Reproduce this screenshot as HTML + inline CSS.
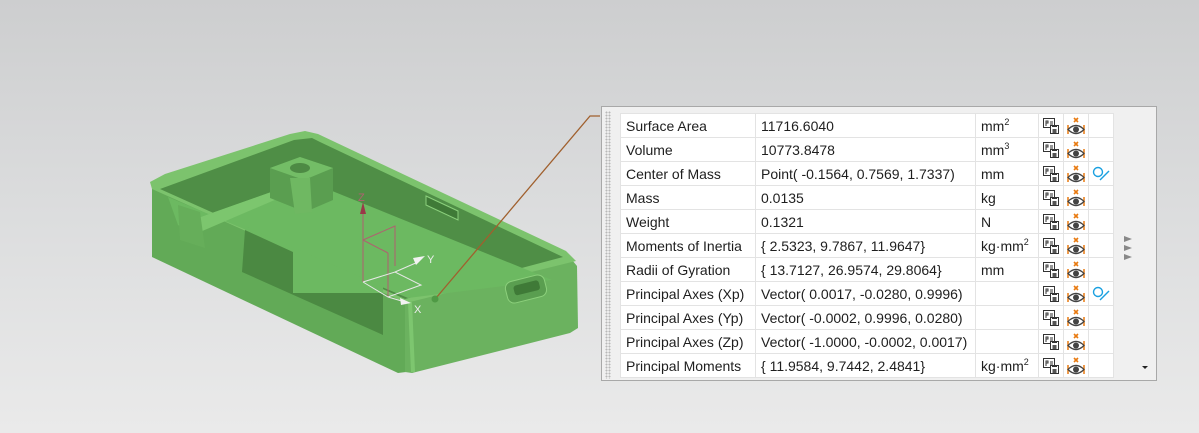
<!DOCTYPE html>
<html><head><meta charset="utf-8"><style>
html,body{margin:0;padding:0}
body{width:1199px;height:433px;overflow:hidden;position:relative;background:linear-gradient(#cdcecf 0%,#dcddde 50%,#eaeaea 100%);font-family:"Liberation Sans",sans-serif}
#panel{position:absolute;left:601px;top:106px;width:556px;height:275px;background:#f0f0f0;border:1px solid #a8a8a8;box-sizing:border-box}
#grip{position:absolute;left:3px;top:4px;width:6px;height:268px;background-image:radial-gradient(circle,#b8b8b8 0.9px,transparent 1.1px);background-size:3px 3px}
table{position:absolute;left:18px;top:6px;border-collapse:collapse;background:#fff;font-size:14px;color:#1e1e1e;table-layout:fixed}
tr{height:24px}
td{height:23px;max-height:23px;border:1px solid #e3e3e3;padding:0 0 0 5px;white-space:nowrap;line-height:22px;overflow:hidden}
td.i{padding:0;text-align:center;width:24px;line-height:0}
sup{font-size:9px;line-height:0;vertical-align:6px}
.arr{position:absolute;left:522px;width:0;height:0;border-top:3px solid transparent;border-bottom:3px solid transparent;border-left:8px solid #888}
</style></head><body>
<svg width="600" height="433" style="position:absolute;left:0;top:0">
<polygon points="152,186 405,300 406,372 398,373 152,257" fill="#62aa57"/>
<polygon points="405,300 572,260 577,266 578,328 570,333 412,373 405,372" fill="#6bb25f"/>
<line x1="410" y1="302" x2="413" y2="372" stroke="#7dc66f" stroke-width="4"/>
<polygon points="150,182 165,174 290,134 305,131 318,134 566,251 576,261 410,302 402,301 152,189" fill="#7cc36d"/>
<polygon points="160,189 294,140 312,138 320,142 563,257 405,299" fill="#4f8e46"/>
<polygon points="168,197 178,225 305,180 552,280 408,298" fill="#6cb961"/>
<polygon points="178,225 200,232 305,187 305,180" fill="#7cc66e"/>
<polygon points="270,168 300,157 333,168 333,200 305,212 270,198" fill="#5a9e50"/>
<polygon points="270,168 300,157 333,168 304,180" fill="#73bd66"/>
<ellipse cx="300" cy="168" rx="10" ry="5" fill="#4d8a44"/>
<polygon points="290,178 310,178 312,212 295,214" fill="#6fb862"/>
<polygon points="178,205 200,212 205,248 180,240" fill="#66ae5a"/>
<polygon points="426,196 458,211 458,220 426,205" fill="#3f7a37" stroke="#8bd07c" stroke-width="1"/>
<polygon points="245,226 383,287 383,293 293,293 293,252 245,230" fill="#6cb961"/>
<polygon points="245,230 293,252 293,293 383,293 383,335 242,272" fill="#4b8942"/>
<rect x="506" y="278" width="40" height="22" rx="7" fill="#5a9e50" stroke="#8cd07c" transform="rotate(-14 526 289)"/>
<rect x="514" y="283" width="26" height="10" rx="3" fill="#3f7a37" transform="rotate(-14 526 289)"/>
<g stroke-width="1" fill="none">
<polyline points="363,282 363,240 395,226 395,266" stroke="#b06070"/>
<line x1="363" y1="240" x2="388" y2="253" stroke="#b06070"/>
<line x1="388" y1="253" x2="388" y2="297" stroke="#b06070"/>
<line x1="363" y1="282" x2="363" y2="212" stroke="#b06070"/>
<polyline points="363,282 388,297 421,285 395,272 363,282" stroke="#e8e8e8"/>
<line x1="395" y1="272" x2="418" y2="262" stroke="#e8e8e8"/>
<line x1="388" y1="297" x2="405" y2="302" stroke="#e8e8e8"/>
</g>
<polygon points="360,214 366,214 363,202" fill="#9a3848"/>
<polygon points="413,258 425,256 416,265" fill="#f2f2f2"/>
<polygon points="400,298 411,303 401,305" fill="#f2f2f2"/>
<text x="358" y="201" font-size="11" fill="#b06070" font-family="Liberation Sans">Z</text>
<text x="427" y="263" font-size="11" fill="#eee" font-family="Liberation Sans">Y</text>
<text x="414" y="313" font-size="11" fill="#eee" font-family="Liberation Sans">X</text>
<polyline points="436,298 590,116 601,116" stroke="#a0602e" stroke-width="1.3" fill="none"/>
<circle cx="435" cy="299" r="3.5" fill="#4f9a45"/>
</svg>
<div id="panel"><div id="grip"></div>
<table>
<colgroup><col style="width:135px"><col style="width:220px"><col style="width:63px"><col style="width:25px"><col style="width:25px"><col style="width:25px"></colgroup>
<tr><td>Surface Area</td><td>11716.6040</td><td>mm<sup>2</sup></td><td class="i">ic</td><td class="i">ie</td><td class="i"></td></tr>
<tr><td>Volume</td><td>10773.8478</td><td>mm<sup>3</sup></td><td class="i">ic</td><td class="i">ie</td><td class="i"></td></tr>
<tr><td>Center of Mass</td><td>Point( -0.1564, 0.7569, 1.7337)</td><td>mm</td><td class="i">ic</td><td class="i">ie</td><td class="i">iq</td></tr>
<tr><td>Mass</td><td>0.0135</td><td>kg</td><td class="i">ic</td><td class="i">ie</td><td class="i"></td></tr>
<tr><td>Weight</td><td>0.1321</td><td>N</td><td class="i">ic</td><td class="i">ie</td><td class="i"></td></tr>
<tr><td>Moments of Inertia</td><td>{ 2.5323, 9.7867, 11.9647}</td><td>kg·mm<sup>2</sup></td><td class="i">ic</td><td class="i">ie</td><td class="i"></td></tr>
<tr><td>Radii of Gyration</td><td>{ 13.7127, 26.9574, 29.8064}</td><td>mm</td><td class="i">ic</td><td class="i">ie</td><td class="i"></td></tr>
<tr><td>Principal Axes (Xp)</td><td>Vector( 0.0017, -0.0280, 0.9996)</td><td></td><td class="i">ic</td><td class="i">ie</td><td class="i">iq</td></tr>
<tr><td>Principal Axes (Yp)</td><td>Vector( -0.0002, 0.9996, 0.0280)</td><td></td><td class="i">ic</td><td class="i">ie</td><td class="i"></td></tr>
<tr><td>Principal Axes (Zp)</td><td>Vector( -1.0000, -0.0002, 0.0017)</td><td></td><td class="i">ic</td><td class="i">ie</td><td class="i"></td></tr>
<tr><td>Principal Moments</td><td>{ 11.9584, 9.7442, 2.4841}</td><td>kg·mm<sup>2</sup></td><td class="i">ic</td><td class="i">ie</td><td class="i"></td></tr>
</table>
<div class="arr" style="top:129px"></div><div class="arr" style="top:138px"></div><div class="arr" style="top:147px"></div>
<div style="position:absolute;left:540px;top:259px;border-left:3px solid transparent;border-right:3px solid transparent;border-top:3px solid #222"></div>
</div>
<script>
var ic='<svg width="18" height="18" viewBox="0 0 18 18" style="vertical-align:middle"><rect x="1.5" y="1.5" width="11" height="9" fill="#fff" stroke="#333"/><path d="M4 4h2v2H4zM4 4v5M8 5h3M8 7h3" stroke="#333" fill="none"/><rect x="8.5" y="8.5" width="8" height="8" fill="#fff" stroke="#333"/><rect x="10.5" y="12" width="4" height="4" fill="#555"/><path d="M10 9.5h5" stroke="#333"/></svg>';
var ie='<svg width="20" height="18" viewBox="0 0 20 18" style="vertical-align:middle"><path d="M8 1l4 4M12 1l-4 4" stroke="#e87a10" stroke-width="1.6"/><path d="M2 8v9M18 8v9" stroke="#e87a10" stroke-width="1.5"/><path d="M2 12.5q8-8 16 0q-8 8-16 0z" fill="#fff" stroke="#444" stroke-width="1.3"/><circle cx="10" cy="12.5" r="3" fill="#444"/></svg>';
var iq='<svg width="20" height="18" viewBox="0 0 20 18" style="vertical-align:middle"><circle cx="7" cy="7" r="4.5" fill="none" stroke="#1aa0e0" stroke-width="1.4"/><path d="M9 15l9-9" stroke="#1aa0e0" stroke-width="1.4"/></svg>';
document.querySelectorAll('td.i').forEach(function(t){var s=t.textContent;t.innerHTML=s=='ic'?ic:s=='ie'?ie:s=='iq'?iq:'';});
</script>
</body></html>
